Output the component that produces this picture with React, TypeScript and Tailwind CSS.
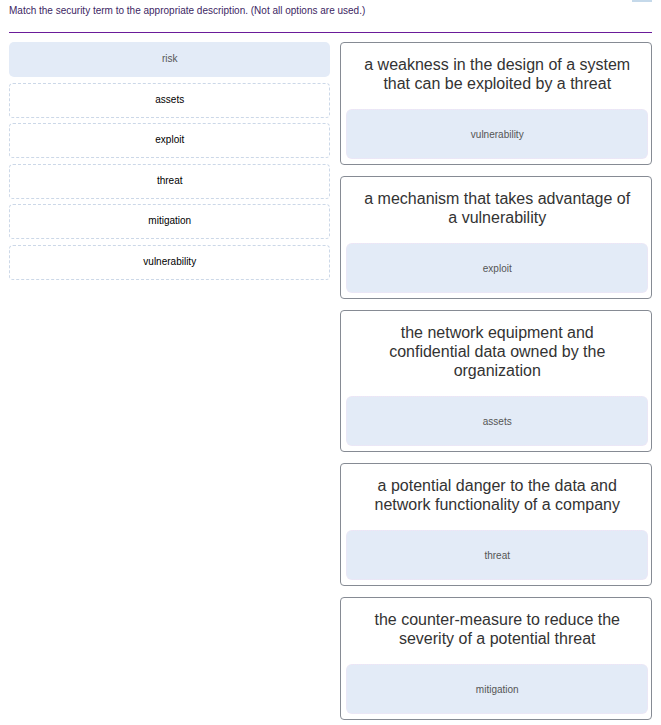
import React from "react";

const options = [
  { label: "risk", used: true },
  { label: "assets", used: false },
  { label: "exploit", used: false },
  { label: "threat", used: false },
  { label: "mitigation", used: false },
  { label: "vulnerability", used: false },
];

const targets = [
  {
    text: "a weakness in the design of a system that can be exploited by a threat",
    answer: "vulnerability",
  },
  {
    text: "a mechanism that takes advantage of a vulnerability",
    answer: "exploit",
  },
  {
    text: "the network equipment and confidential data owned by the organization",
    answer: "assets",
  },
  {
    text: "a potential danger to the data and network functionality of a company",
    answer: "threat",
  },
  {
    text: "the counter-measure to reduce the severity of a potential threat",
    answer: "mitigation",
  },
];

const App = () => {
  return (
    <div className="relative w-[661px] min-h-[725px] bg-white font-['Liberation_Sans',Arial,sans-serif]">
      {/* cut-off button at top right */}
      <div className="absolute right-[9px] top-0 h-[2px] w-[20px] bg-[#c5d9ea]" />

      {/* Question */}
      <div className="mx-[9px] pt-[4px] pb-[15px] border-b border-[#6a1b9a]">
        <p className="text-[10px] leading-[13px] text-[#3d1f63]">
          Match the security term to the appropriate description. (Not all options are used.)
        </p>
      </div>

      <div className="flex gap-[10px] px-[9px] pt-[9px]">
        {/* Options */}
        <div className="flex w-[322px] flex-col gap-[5.6px]">
          {options.map((opt, i) =>
            opt.used ? (
              <div
                key={i}
                className="flex h-[35px] items-center justify-center rounded-[5px] bg-[#e3ebf7] pb-[2px] text-[10px] text-[#555]"
              >
                {opt.label}
              </div>
            ) : (
              <div
                key={i}
                className="flex h-[35px] items-center justify-center rounded-[4px] border border-dashed border-[#ccd8e8] pb-[2px] text-[10px] text-black"
              >
                {opt.label}
              </div>
            )
          )}
        </div>

        {/* Targets */}
        <div className="flex w-[312px] flex-col gap-[11px] pb-[6px]">
          {targets.map((t, i) => (
            <div
              key={i}
              className="flex flex-col rounded-[4px] border border-[#868b94] pl-[5px] pr-[3px] pt-[12px] pb-[5px]"
            >
              <p className="mx-auto w-[278px] text-center text-[16px] leading-[19px] text-[#333]">
                {t.text}
              </p>
              <div className="mt-[16px] flex h-[50px] items-center justify-center rounded-[6px] border border-dotted border-[#f2e3f5] bg-[#e3ebf7] text-[10px] text-[#555]">
                {t.answer}
              </div>
            </div>
          ))}
        </div>
      </div>
    </div>
  );
};

export default App;
